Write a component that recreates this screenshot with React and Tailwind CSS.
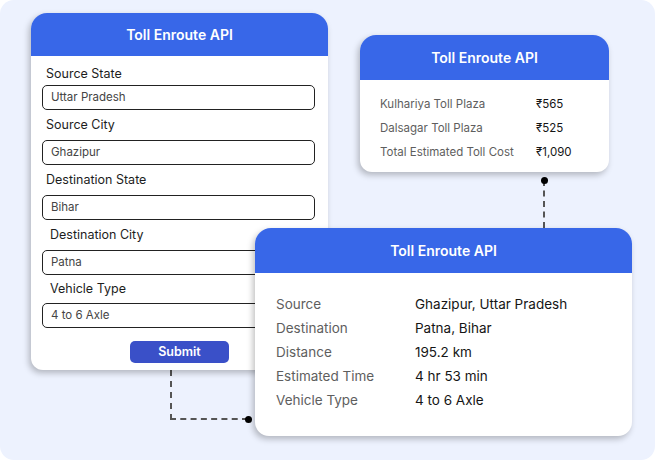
import React from "react"

const font = { fontFamily: "Inter, 'Noto Sans', sans-serif" }

function Header() {
  return (
    <div className="bg-[#3867e8] text-white font-semibold text-[14px] flex items-center justify-center">
      Toll Enroute API
    </div>
  )
}

function Field({ label, value, indent, lh }) {
  return (
    <div className="flex flex-col">
      <div className={`text-[12.5px] text-[#1d1d1d] flex items-center ${lh} ${indent ? "pl-[8px]" : "pl-[4px]"}`}>{label}</div>
      <div className="h-[25px] border border-[#222] rounded-[5px] flex items-center px-[8px] text-[11.5px] text-[#444]">
        {value}
      </div>
    </div>
  )
}

function Row({ label, value, cls }) {
  return (
    <div className={`flex items-center ${cls}`}>
      <span className="text-[#5e5e5e]">{label}</span>
      <span className="text-[#151515]">{value}</span>
    </div>
  )
}

export default function App() {
  return (
    <div className="w-[655px] h-[460px] bg-white" style={font}>
      <div className="relative w-full h-full bg-[#edf2fe] rounded-[14px] overflow-hidden">
        {/* connectors */}
        <div className="absolute left-[170px] top-[370px] w-[78px] h-[50px] border-l-2 border-b-2 border-dashed border-[#555]" />
        <div className="absolute left-[245px] top-[416px] w-[7px] h-[7px] rounded-full bg-black" />
        <div className="absolute left-[543px] top-[180px] h-[48px] border-l-2 border-dashed border-[#555]" />
        <div className="absolute left-[541px] top-[177px] w-[7px] h-[7px] rounded-full bg-black" />

        {/* form card */}
        <div className="absolute left-[31px] top-[13px] w-[297px] h-[357px] bg-white rounded-t-[16px] rounded-b-[12px] overflow-hidden shadow-[-2px_3px_6px_rgba(0,0,0,0.25)] flex flex-col">
          <div className="h-[43px] grid"><Header /></div>
          <div className="pl-[11px] pr-[13px] pt-[7px] flex flex-col">
            <Field label="Source State" value="Uttar Pradesh" lh="h-[22px]" />
            <Field label="Source City" value="Ghazipur" lh="h-[30px]" />
            <Field label="Destination State" value="Bihar" lh="h-[30px]" />
            <Field label="Destination City" value="Patna" indent lh="h-[30px]" />
            <Field label="Vehicle Type" value="4 to 6 Axle" indent lh="h-[28px]" />
            <div className="flex justify-center pt-[13px] pl-[2px]">
              <button className="w-[99px] h-[22px] rounded-[5px] bg-[#3a50c8] text-white text-[12.5px] font-semibold">
                Submit
              </button>
            </div>
          </div>
        </div>

        {/* toll card */}
        <div className="absolute left-[360px] top-[35px] w-[249px] h-[137px] bg-white rounded-t-[16px] rounded-b-[12px] overflow-hidden shadow-[-2px_3px_6px_rgba(0,0,0,0.25)] flex flex-col">
          <div className="h-[45px] grid"><Header /></div>
          <div className="pl-[20px] pt-[13px] flex flex-col text-[11.5px]">
            <Row label="Kulhariya Toll Plaza" value="₹565" cls="h-[24px] [&>span:first-child]:w-[156px]" />
            <Row label="Dalsagar Toll Plaza" value="₹525" cls="h-[24px] [&>span:first-child]:w-[156px]" />
            <Row label="Total Estimated Toll Cost" value="₹1,090" cls="h-[24px] [&>span:first-child]:w-[156px]" />
          </div>
        </div>

        {/* result card */}
        <div className="absolute left-[255px] top-[228px] w-[377px] h-[208px] bg-white rounded-t-[16px] rounded-b-[14px] overflow-hidden shadow-[-2px_3px_6px_rgba(0,0,0,0.25)] flex flex-col">
          <div className="h-[45px] grid"><Header /></div>
          <div className="pl-[21px] pt-[19px] flex flex-col text-[13.5px]">
            <Row label="Source" value="Ghazipur, Uttar Pradesh" cls="h-[24px] [&>span:first-child]:w-[139px]" />
            <Row label="Destination" value="Patna, Bihar" cls="h-[24px] [&>span:first-child]:w-[139px]" />
            <Row label="Distance" value="195.2 km" cls="h-[24px] [&>span:first-child]:w-[139px]" />
            <Row label="Estimated Time" value="4 hr 53 min" cls="h-[24px] [&>span:first-child]:w-[139px]" />
            <Row label="Vehicle Type" value="4 to 6 Axle" cls="h-[24px] [&>span:first-child]:w-[139px]" />
          </div>
        </div>
      </div>
    </div>
  )
}
